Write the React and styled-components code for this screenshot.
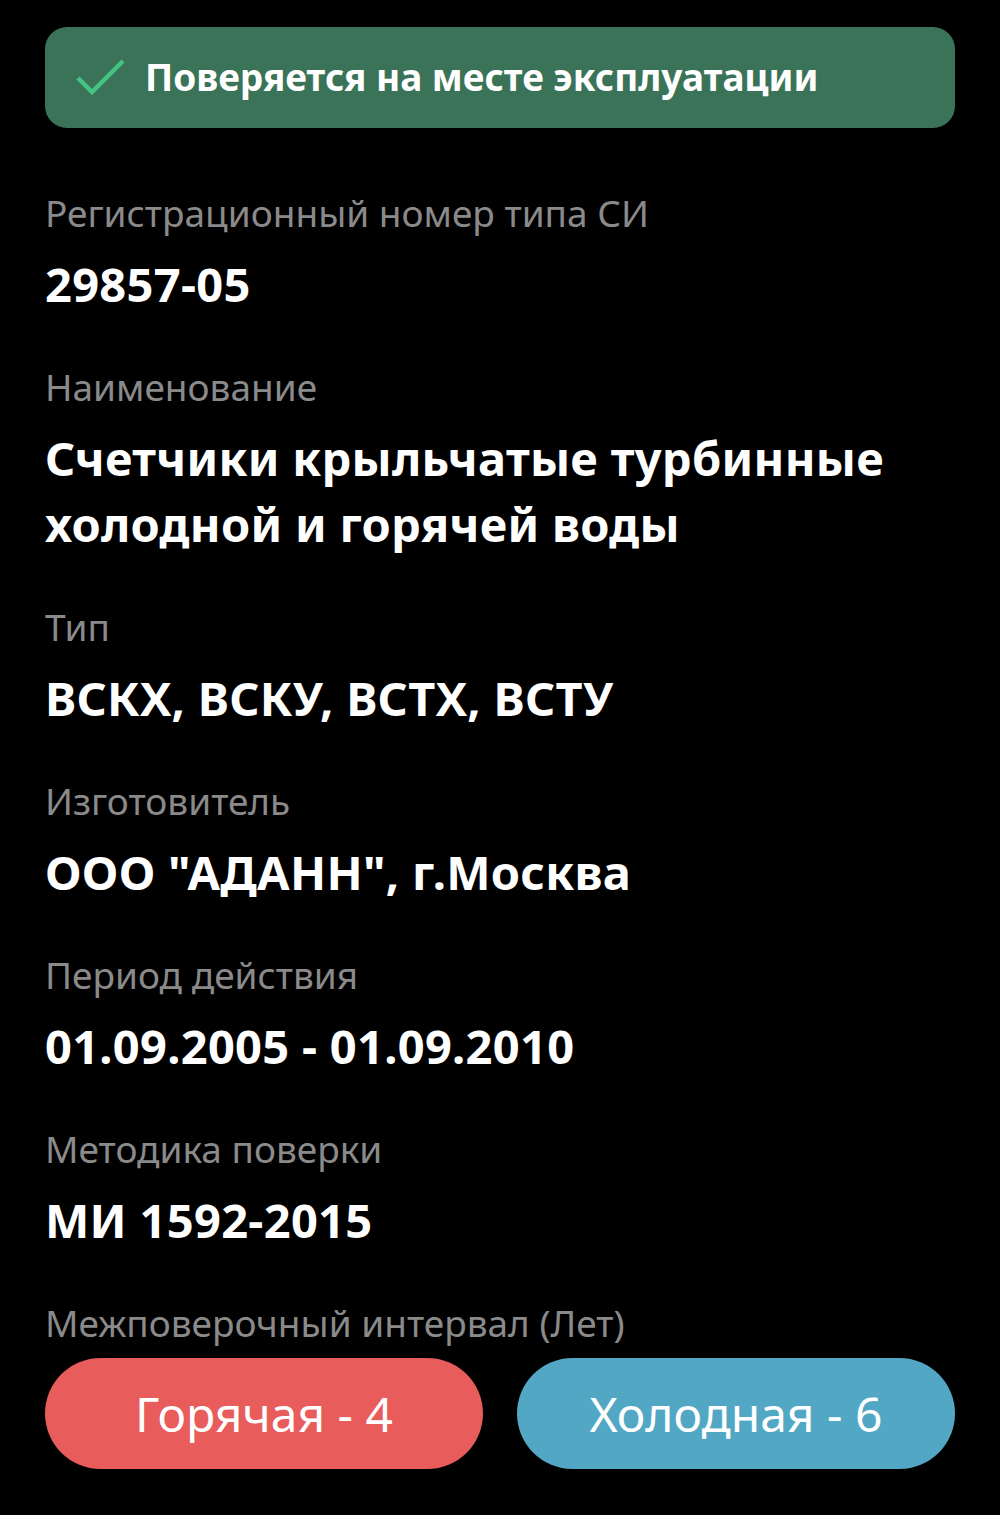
import React from "react";
import styled, { createGlobalStyle } from "styled-components";

const Global = createGlobalStyle`
  html, body { margin: 0; padding: 0; background: #000; }
  body { font-family: "Noto Sans", "Open Sans", sans-serif; }
`;

const Page = styled.div`
  background: #000;
  min-height: 1515px;
  padding: 27px 45px 0;
  box-sizing: border-box;
  display: flex;
  flex-direction: column;
`;

const Banner = styled.div`
  height: 101px;
  border-radius: 22px;
  background: #3a7358;
  display: flex;
  align-items: center;
  padding-left: 31px;
  gap: 19px;
  box-sizing: border-box;
`;

const BannerText = styled.span`
  color: #fff;
  font-weight: 700;
  font-size: 37px;
  line-height: 1;
  margin-top: -2px;
`;

const Fields = styled.div`
  display: flex;
  flex-direction: column;
  gap: 44px;
  margin-top: 59px;
`;

const Field = styled.div`
  display: flex;
  flex-direction: column;
  gap: 12px;
`;

const Label = styled.div`
  color: #8a8a8a;
  font-size: 37px;
  line-height: 52px;
`;

const Value = styled.div`
  color: #fff;
  font-size: 47px;
  font-weight: 700;
  line-height: 66px;
  letter-spacing: 0.3px;
`;

const Buttons = styled.div`
  display: grid;
  grid-template-columns: 1fr 1fr;
  gap: 34px;
  margin-top: 9px;
`;

const Pill = styled.div`
  height: 111px;
  border-radius: 56px;
  background: ${(p) => p.$bg};
  color: #fff;
  font-size: 48px;
  display: flex;
  align-items: center;
  justify-content: center;
`;

const Check = () => (
  <svg width="50" height="42" viewBox="0 0 50 42">
    <path d="M2 21 L16 35 L47 4" fill="none" stroke="#45c281" strokeWidth="4.5" />
  </svg>
);

const fields = [
  ["Регистрационный номер типа СИ", "29857-05"],
  ["Наименование", "Счетчики крыльчатые турбинные холодной и горячей воды"],
  ["Тип", "ВСКХ, ВСКУ, ВСТХ, ВСТУ"],
  ["Изготовитель", "ООО \"АДАНН\", г.Москва"],
  ["Период действия", "01.09.2005 - 01.09.2010"],
  ["Методика поверки", "МИ 1592-2015"],
];

export default function App() {
  return (
    <>
      <Global />
      <Page>
        <Banner>
          <Check />
          <BannerText>Поверяется на месте эксплуатации</BannerText>
        </Banner>
        <Fields>
          {fields.map(([l, v]) => (
            <Field key={l}>
              <Label>{l}</Label>
              <Value>{v}</Value>
            </Field>
          ))}
          <Field>
            <Label>Межповерочный интервал (Лет)</Label>
          </Field>
        </Fields>
        <Buttons>
          <Pill $bg="#e85c5c">Горячая - 4</Pill>
          <Pill $bg="#52a8c4">Холодная - 6</Pill>
        </Buttons>
      </Page>
    </>
  );
}
